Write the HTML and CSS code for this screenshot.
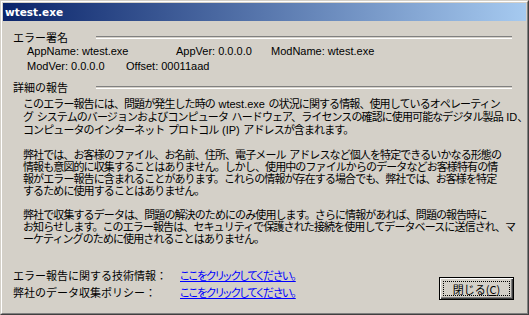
FILE: index.html
```html
<!DOCTYPE html>
<html>
    <head>
        <meta charset="utf-8" />
        <title>wtest.exe</title>
        <link rel="stylesheet" href="styles.css">
    </head>
    <body>
        <div class="window">
            <div class="frame">
                <div class="titlebar">wtest.exe</div>
                <div class="content">
                    <div class="group_head">
                        <span class="group_label">エラー署名</span>
                        <span class="etch"></span>
                    </div>
                    <div class="sig_row">
                        <span class="sig_a">AppName: wtest.exe</span>
                        <span class="sig_b">AppVer: 0.0.0.0</span>
                        <span>ModName: wtest.exe</span>
                    </div>
                    <div class="sig_row">
                        <span class="sig_c">ModVer: 0.0.0.0</span>
                        <span>Offset: 00011aad</span>
                    </div>

                    <div class="group_head second">
                        <span class="group_label">詳細の報告</span>
                        <span class="etch"></span>
                    </div>
                    <div class="report">
                        <p>このエラー報告には、問題が発生した時の <span class="lat">wtest.exe</span> の状況に関する情報、使用しているオペレーティン<br>グ システムのバージョンおよびコンピュータ ハードウェア、ライセンスの確認に使用可能なデジタル製品 <span class="lat">ID</span>、<br>コンピュータのインターネット プロトコル <span class="lat">(IP)</span> アドレスが含まれます。</p>
                        <p>弊社では、お客様のファイル、お名前、住所、電子メール アドレスなど個人を特定できるいかなる形態の<br>情報も意図的に収集することはありません。しかし、使用中のファイルからのデータなどお客様特有の情<br>報がエラー報告に含まれることがあります。これらの情報が存在する場合でも、弊社では、お客様を特定<br>するために使用することはありません。</p>
                        <p>弊社で収集するデータは、問題の解決のためにのみ使用します。さらに情報があれば、問題の報告時に<br>お知らせします。このエラー報告は、セキュリティで保護された接続を使用してデータベースに送信され、マ<br>ーケティングのために使用されることはありません。</p>
                    </div>

                    <div class="bottom">
                        <div class="links">
                            <span>エラー報告に関する技術情報：</span>
                            <a href="#">ここをクリックしてください。</a>
                            <span>弊社のデータ収集ポリシー：</span>
                            <a href="#">ここをクリックしてください。</a>
                        </div>
                        <button class="btn_default"><span class="focus">閉じる(<u>C</u>)</span></button>
                    </div>
                </div>
            </div>
        </div>
    </body>
</html>
```

FILE: styles.css
```css
html, body {
    margin: 0;
    padding: 0;
    background-color: #d4d0c8;
}

body {
    font-family: "Noto Sans CJK JP", "Liberation Sans", sans-serif;
    font-size: 11px;
    color: #000000;
}

.window {
    width: 529px;
    height: 315px;
    box-sizing: border-box;
    border: 1px solid;
    border-color: #d4d0c8 #404040 #404040 #d4d0c8;
}

.frame {
    height: 100%;
    box-sizing: border-box;
    border: 1px solid;
    border-color: #ffffff #808080 #808080 #ffffff;
    padding: 1px;
    display: flex;
    flex-direction: column;
}

.titlebar {
    height: 18px;
    line-height: 18px;
    padding-left: 2px;
    background: linear-gradient(to right, #0a246a, #a6caf0);
    color: #ffffff;
    font-family: "DejaVu Sans", sans-serif;
    font-weight: bold;
    font-size: 10.5px;
}

.content {
    flex: 1;
    display: flex;
    flex-direction: column;
    padding: 9px 12px 12px 10px;
}

.group_head {
    display: flex;
    align-items: center;
    height: 14px;
}

.group_head.second {
    margin-top: 6px;
}

.group_label {
    width: 83px;
    flex: none;
}

.etch {
    flex: 1;
    height: 1px;
    margin-right: 2px;
    border-top: 1px solid #808080;
    border-bottom: 1px solid #ffffff;
}

.sig_row {
    display: flex;
    height: 15px;
    line-height: 15px;
    padding-left: 14px;
    font-family: "Liberation Sans", sans-serif;
    font-size: 11px;
}

.sig_a {
    width: 149px;
}

.sig_b {
    width: 95px;
}

.sig_c {
    width: 99px;
}

.report {
    margin-top: 3px;
    padding-left: 10px;
}

.report p {
    margin: 0 0 12px 0;
    line-height: 12px;
    white-space: nowrap;
    letter-spacing: -0.9px;
    word-spacing: 2px;
}

.report .lat {
    letter-spacing: 0;
    font-family: "Liberation Sans", sans-serif;
}

.bottom {
    margin-top: auto;
    display: flex;
    align-items: flex-end;
    justify-content: space-between;
}

.links {
    display: grid;
    grid-template-columns: 167px auto;
    grid-auto-rows: 17px;
    align-items: center;
}

.links a {
    color: #0000ff;
    text-decoration: underline;
    font-feature-settings: "palt";
    letter-spacing: -1px;
}

.btn_default {
    width: 75px;
    height: 23px;
    margin: 0;
    padding: 0;
    background-color: #d4d0c8;
    border: 1px solid #000000;
    box-shadow: inset 1px 1px 0 #ffffff, inset -1px -1px 0 #404040, inset -2px -2px 0 #808080;
    font-family: "Noto Sans CJK JP", sans-serif;
    font-size: 11px;
    color: #000000;
    display: flex;
    align-items: stretch;
    justify-content: stretch;
}

.focus {
    flex: 1;
    margin: 3px;
    border: 1px dotted #000000;
    display: flex;
    align-items: center;
    justify-content: center;
}
```
